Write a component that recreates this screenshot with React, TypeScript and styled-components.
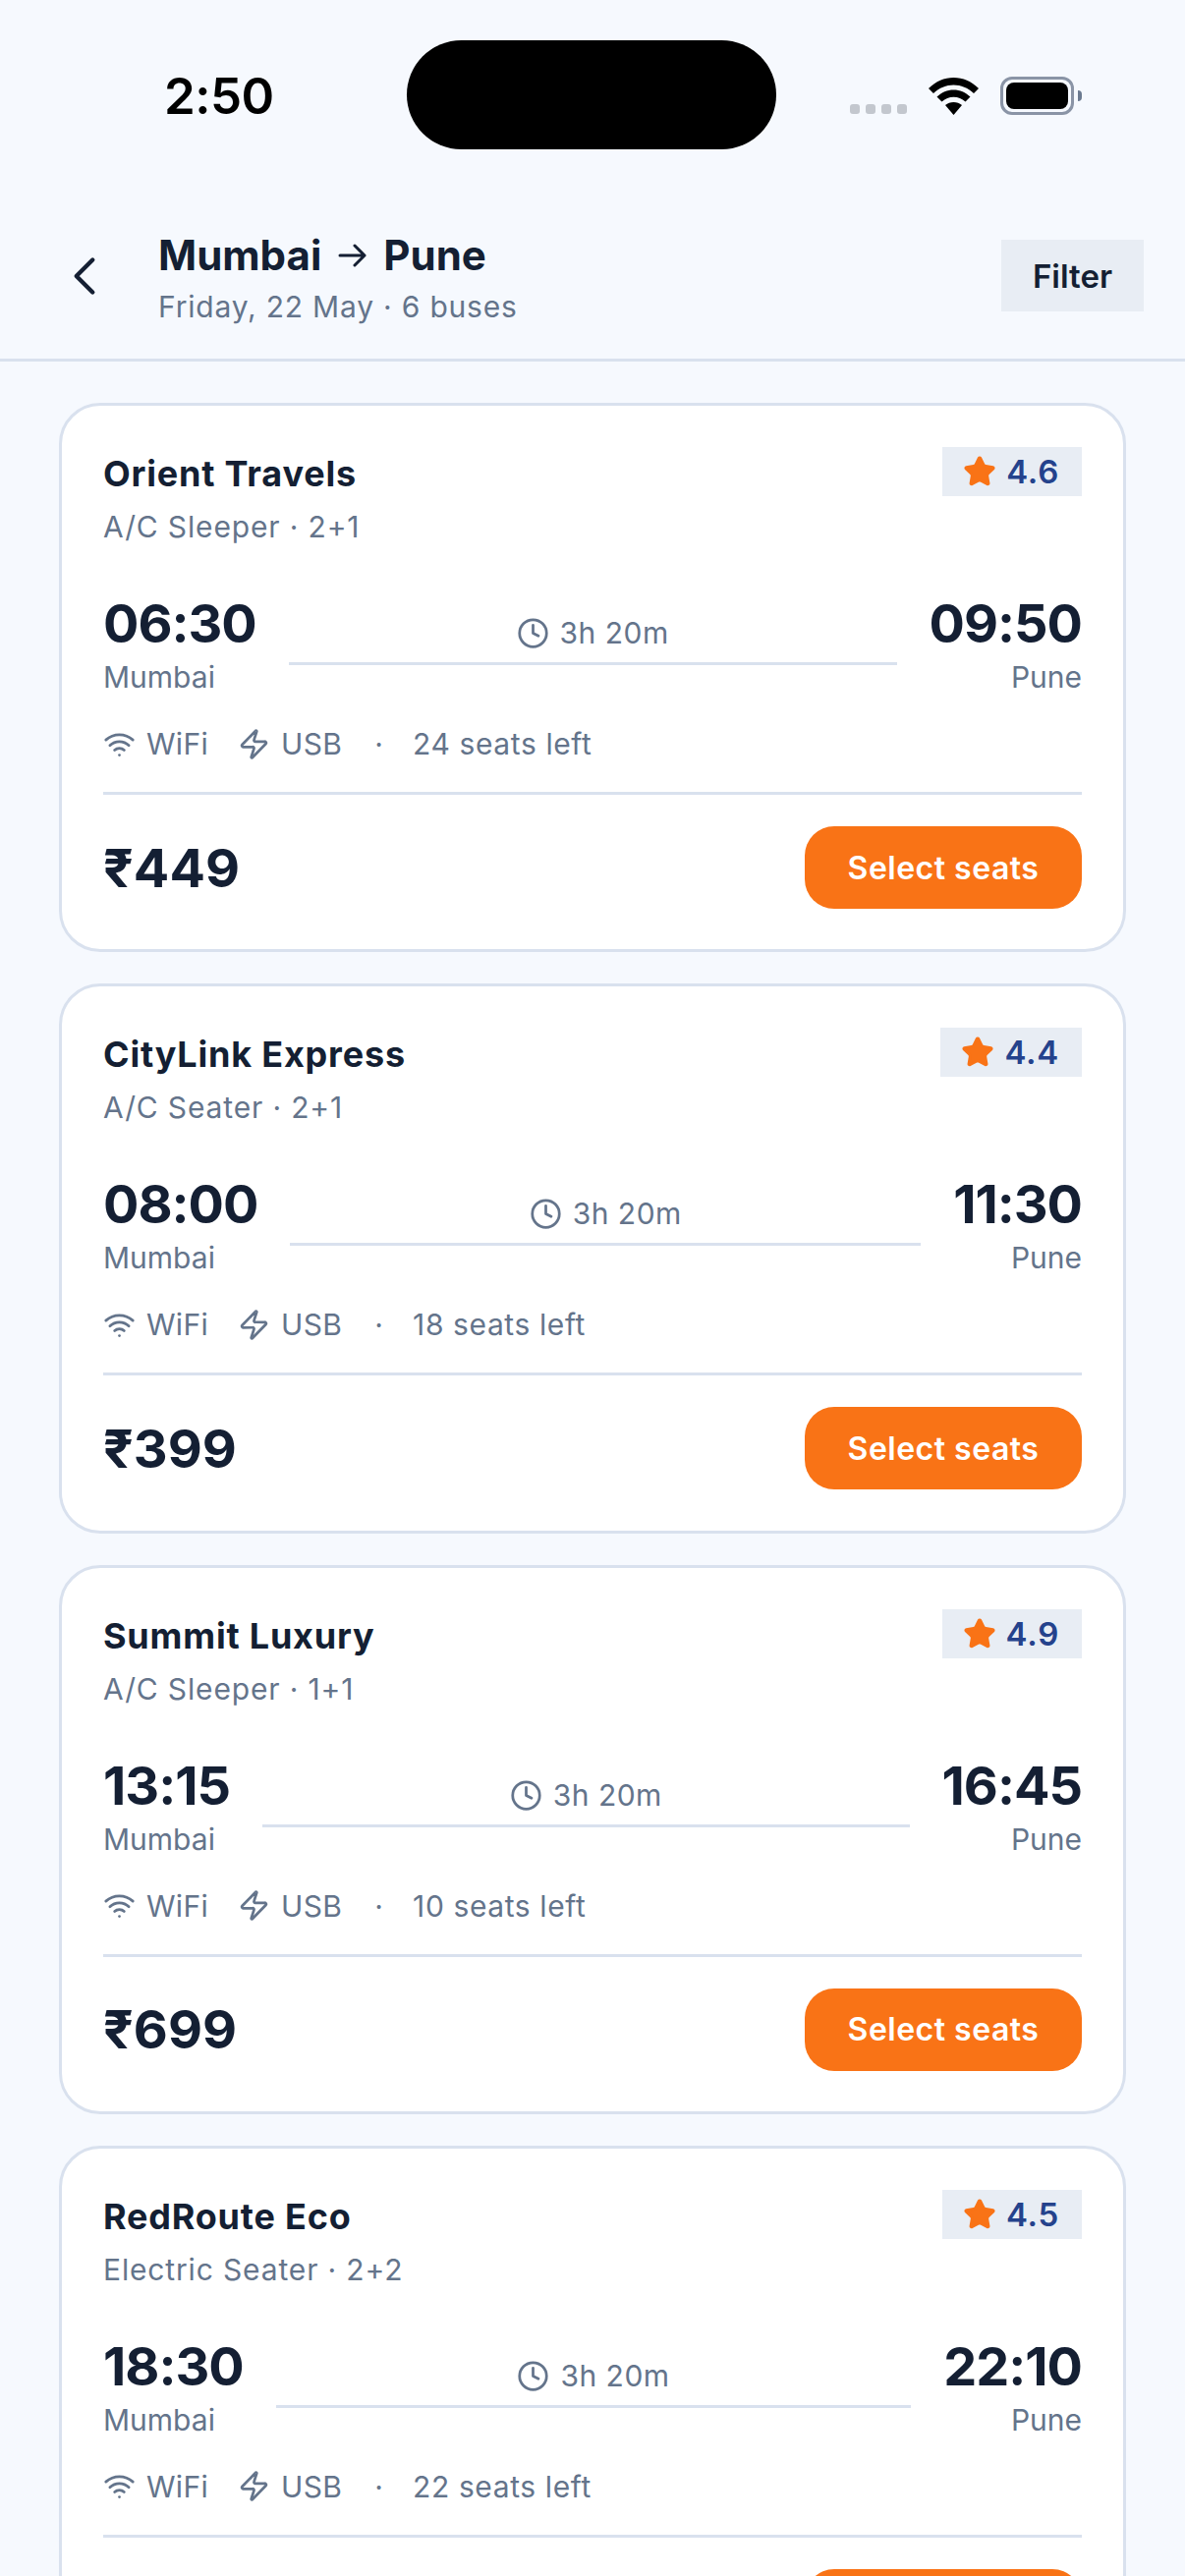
import styled, { createGlobalStyle } from 'styled-components';
import { ChevronLeft, Clock, Star, Wifi, Zap } from 'lucide-react';

const GlobalStyle = createGlobalStyle`
  html, body {
    margin: 0;
    padding: 0;
    background: #f6f9fe;
  }
  * {
    box-sizing: border-box;
  }
`;

const Screen = styled.div`
  width: 1206px;
  height: 2622px;
  overflow: hidden;
  background: #f6f9fe;
  font-family: Inter, "Noto Sans", sans-serif;
  color: #141f33;
`;

// Status bar
const StatusBar = styled.div`
  height: 193px;
  padding: 41px 113px 0 167px;
  display: flex;
  align-items: flex-start;
  justify-content: space-between;
`;

const StatusTime = styled.div`
  width: 247px;
  margin-top: 27px;
  font-size: 51px;
  line-height: 60px;
  font-weight: 600;
  letter-spacing: -0.5px;
  color: #000;
`;

const Island = styled.div`
  width: 376px;
  height: 111px;
  border-radius: 56px;
  background: #000;
`;

const StatusIcons = styled.div`
  margin-top: 37px;
  margin-left: auto;
  display: flex;
  align-items: flex-end;
  height: 39px;
`;

const SignalDots = styled.div`
  display: flex;
  gap: 6px;
  margin-right: 22px;
  padding-bottom: 1px;
`;

const SignalDot = styled.span`
  width: 10px;
  height: 10px;
  border-radius: 3px;
  background: #c3c7ce;
`;

const Battery = styled.div`
  position: relative;
  width: 75px;
  height: 39px;
  margin-left: 22px;
  padding: 3px;
  border: 3px solid #8a94a6;
  border-radius: 12px;

  &::after {
    content: '';
    position: absolute;
    right: -11px;
    top: 11px;
    width: 4px;
    height: 11px;
    border-radius: 0 4px 4px 0;
    background: #6b7a90;
  }
`;

const BatteryFill = styled.div`
  width: 100%;
  height: 100%;
  border-radius: 8px;
  background: #000;
`;

// Header
const Header = styled.header`
  height: 175px;
  padding: 42px 42px 0 53px;
  display: flex;
  align-items: flex-start;
  border-bottom: 3px solid #d9e1ee;
`;

const BackButton = styled.div`
  width: 108px;
  margin-top: 13px;
  display: flex;
  color: #141f33;
`;

const HeaderText = styled.div`
  flex: 1;
`;

const RouteTitle = styled.div`
  display: flex;
  align-items: center;
  gap: 17px;
  font-size: 42px;
  line-height: 50px;
  font-weight: 700;
`;

const RouteSub = styled.div`
  margin-top: 8px;
  font-size: 30px;
  line-height: 38px;
  letter-spacing: 0.8px;
  color: #64748b;
`;

const FilterButton = styled.div`
  width: 145px;
  height: 73px;
  margin-top: 9px;
  display: flex;
  align-items: center;
  justify-content: center;
  background: #e8edf4;
  font-size: 33px;
  font-weight: 600;
`;

// Bus list
const List = styled.main`
  padding: 42px 60px;
  display: flex;
  flex-direction: column;
  gap: 32px;
`;

const Card = styled.article`
  height: 559.25px;
  flex-shrink: 0;
  padding: 42px;
  background: #fff;
  border: 3px solid #d9e1ee;
  border-radius: 42px;
`;

const CardTop = styled.div`
  display: flex;
  justify-content: space-between;
  align-items: flex-start;
  height: 110px;
`;

const Operator = styled.div`
  margin-top: 5px;
  font-size: 36px;
  line-height: 44px;
  font-weight: 700;
  letter-spacing: 0.8px;
`;

const BusType = styled.div`
  margin-top: 12px;
  font-size: 30px;
  line-height: 40px;
  letter-spacing: 0.85px;
  color: #64748b;
`;

const Rating = styled.div`
  height: 50px;
  padding: 0 23px 0 21px;
  display: flex;
  align-items: center;
  gap: 10px;
  background: #e8edf4;
  color: #24428c;
  font-size: 33px;
  font-weight: 600;
  letter-spacing: 0.75px;
`;

const TimeRow = styled.div`
  margin-top: 39px;
  display: flex;
  align-items: flex-start;
  gap: 33px;
`;

const Stop = styled.div<{ $end?: boolean }>`
  text-align: ${(p) => (p.$end ? 'right' : 'left')};
`;

const Clocktime = styled.div`
  font-size: 54px;
  line-height: 62px;
  font-weight: 700;
  letter-spacing: -1px;
`;

const StopName = styled.div`
  margin-top: 5px;
  font-size: 30px;
  line-height: 36px;
  color: #64748b;
`;

const Track = styled.div`
  flex: 1;
  height: 73px;
  padding-top: 22px;
  display: flex;
  align-items: flex-start;
  justify-content: center;
  gap: 11px;
  border-bottom: 3px solid #d9e1ee;
  font-size: 30px;
  line-height: 36px;
  letter-spacing: 0.5px;
  color: #64748b;
`;

const TrackIcon = styled.span`
  display: flex;
  margin-top: 2px;
`;

const Amenities = styled.div`
  margin-top: 32px;
  height: 67px;
  display: flex;
  align-items: flex-start;
  font-size: 30px;
  line-height: 36px;
  letter-spacing: 0.3px;
  color: #64748b;
`;

const Amenity = styled.span`
  display: flex;
  align-items: center;
  gap: 11px;
  margin-right: 30px;
`;

const Dot = styled.span`
  margin: 0 30px 0 3px;
`;

const Seats = styled.span`
  letter-spacing: 0.6px;
`;

const CardBottom = styled.div`
  padding-top: 32px;
  display: flex;
  align-items: center;
  justify-content: space-between;
  border-top: 3px solid #d9e1ee;
`;

const Price = styled.div`
  font-size: 54px;
  font-weight: 700;
`;

const SelectButton = styled.div`
  width: 282px;
  height: 84px;
  display: flex;
  align-items: center;
  justify-content: center;
  background: #f97316;
  border-radius: 30px;
  color: #fff;
  font-size: 32px;
  font-weight: 600;
  letter-spacing: 0.5px;
`;

const buses = [
  { name: 'Orient Travels', type: 'A/C Sleeper · 2+1', rating: '4.6', from: '06:30', to: '09:50', seats: 24, price: 449 },
  { name: 'CityLink Express', type: 'A/C Seater · 2+1', rating: '4.4', from: '08:00', to: '11:30', seats: 18, price: 399 },
  { name: 'Summit Luxury', type: 'A/C Sleeper · 1+1', rating: '4.9', from: '13:15', to: '16:45', seats: 10, price: 699 },
  { name: 'RedRoute Eco', type: 'Electric Seater · 2+2', rating: '4.5', from: '18:30', to: '22:10', seats: 22, price: 349 },
];

export default function App() {
  return (
    <Screen>
      <GlobalStyle />
      <StatusBar>
        <StatusTime>2:50</StatusTime>
        <Island />
        <StatusIcons>
          <SignalDots>
            <SignalDot />
            <SignalDot />
            <SignalDot />
            <SignalDot />
          </SignalDots>
          <svg width="51" height="38" viewBox="0 0 51 38">
            <path d="M25.5 0C16 0 7.5 3.6 0 11l5 5C11 10.4 18 7.5 25.5 7.5S40 10.400 46 16l5-5C43.500 3.600 35 0 25.500 0Z" fill="#000" />
            <path d="M25.500 12.500c-6.500 0-12 2.400-17 7l5 5c3.500-3 7.500-4.700 12-4.700s8.500 1.700 12 4.700l5-5c-5-4.600-10.500-7-17-7Z" fill="#000" />
            <path d="M25.500 25c-3.300 0-6 1-8.500 3l8.500 10 8.500-10c-2.500-2-5.200-3-8.500-3Z" fill="#000" />
          </svg>
          <Battery>
            <BatteryFill />
          </Battery>
        </StatusIcons>
      </StatusBar>

      <Header>
        <BackButton>
          <ChevronLeft size={66} strokeWidth={1.6} />
        </BackButton>
        <HeaderText>
          <RouteTitle>
            <span>Mumbai</span>
            <svg width="29" height="24" viewBox="0 0 29 24" fill="none" stroke="#141f33" strokeWidth="3" strokeLinecap="round" strokeLinejoin="round">
              <path d="M2 12h25M17 2l10 10-10 10" />
            </svg>
            <span>Pune</span>
          </RouteTitle>
          <RouteSub>Friday, 22 May · 6 buses</RouteSub>
        </HeaderText>
        <FilterButton>Filter</FilterButton>
      </Header>

      <List>
        {buses.map((bus) => (
          <Card key={bus.name}>
            <CardTop>
              <div>
                <Operator>{bus.name}</Operator>
                <BusType>{bus.type}</BusType>
              </div>
              <Rating>
                <Star size={34} fill="#f97316" color="#f97316" strokeWidth={2} />
                {bus.rating}
              </Rating>
            </CardTop>
            <TimeRow>
              <Stop>
                <Clocktime>{bus.from}</Clocktime>
                <StopName>Mumbai</StopName>
              </Stop>
              <Track>
                <TrackIcon>
                  <Clock size={33} strokeWidth={2} />
                </TrackIcon>
                3h 20m
              </Track>
              <Stop $end>
                <Clocktime>{bus.to}</Clocktime>
                <StopName>Pune</StopName>
              </Stop>
            </TimeRow>
            <Amenities>
              <Amenity>
                <Wifi size={33} strokeWidth={2} />
                WiFi
              </Amenity>
              <Amenity>
                <Zap size={33} strokeWidth={2} />
                USB
              </Amenity>
              <Dot>·</Dot>
              <Seats>{bus.seats} seats left</Seats>
            </Amenities>
            <CardBottom>
              <Price>₹{bus.price}</Price>
              <SelectButton>Select seats</SelectButton>
            </CardBottom>
          </Card>
        ))}
      </List>
    </Screen>
  );
}
